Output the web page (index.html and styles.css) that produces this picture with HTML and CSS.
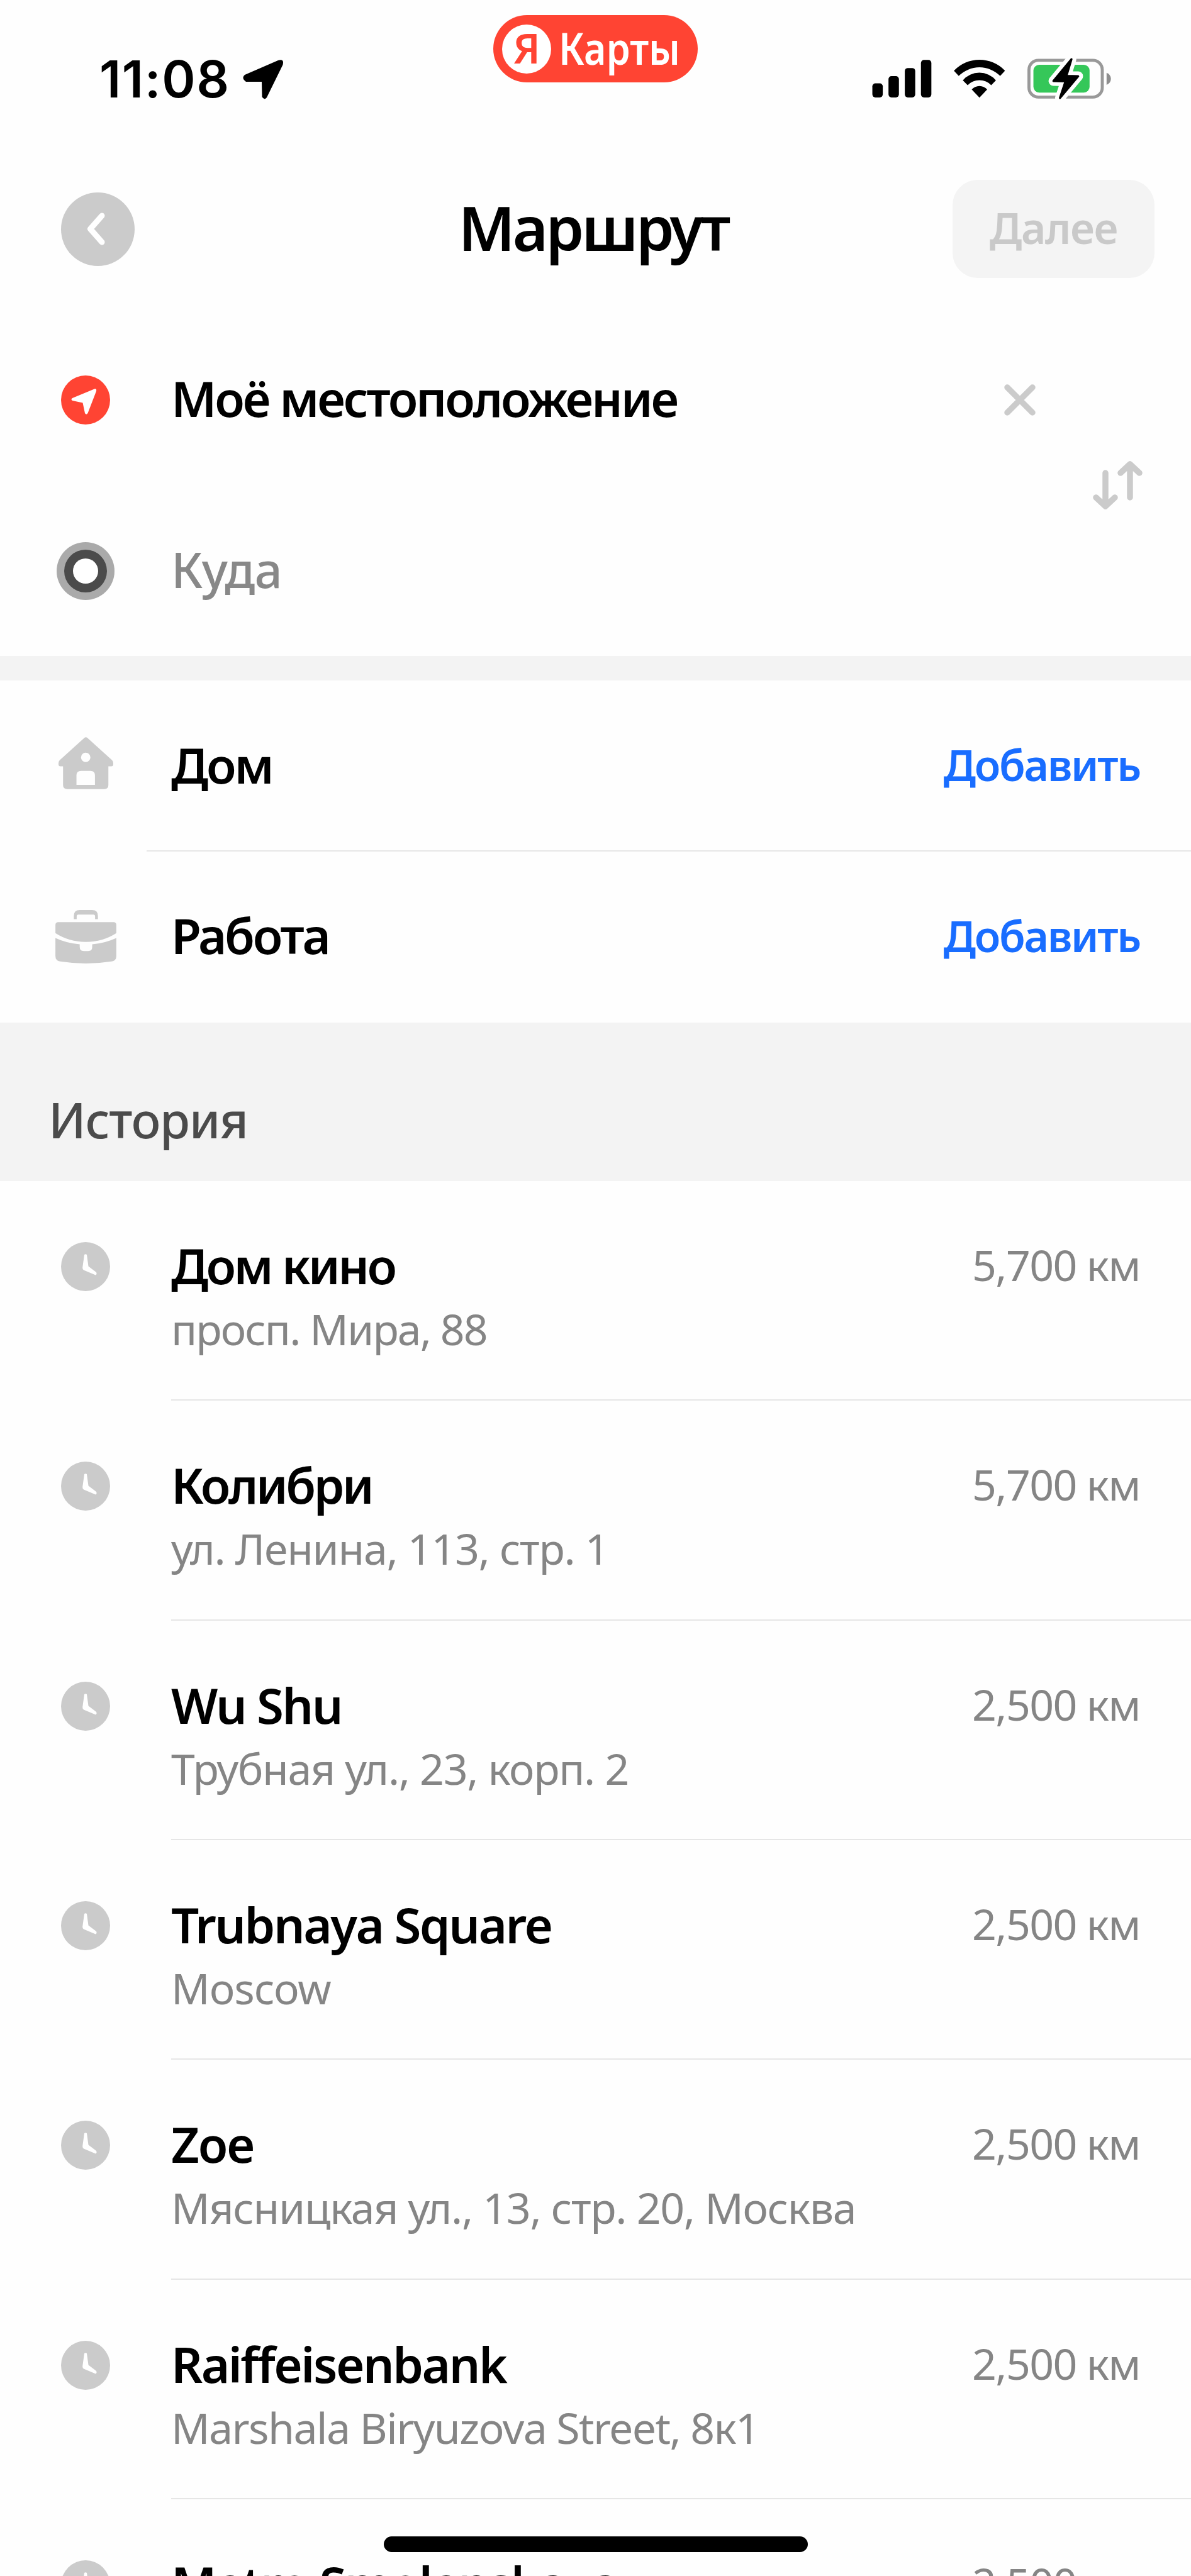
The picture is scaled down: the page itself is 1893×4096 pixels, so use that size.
FILE: index.html
```html
<!DOCTYPE html>
<html lang="ru">
<head>
    <meta charset="UTF-8">
    <meta name="viewport" content="width=device-width, initial-scale=1.0">
    <title>Маршрут</title>
    <link rel="stylesheet" href="styles.css">
</head>
<body>
    <svg class="sprite" width="0" height="0">
        <symbol id="clock" viewBox="0 0 78 78">
            <circle cx="39" cy="39" r="39" fill="#cbcbcb"/>
            <path d="M37 20 Q39 18.500 41 20 L43.500 38.500 L56 48 Q57.500 51 55 52.500 L36 44.500 Q34 43 34.200 40.500 Z" fill="#fff"/>
        </symbol>
    </svg>

    <div class="screen">
        <header class="status-bar">
            <div class="status-left">
                <span class="time">11:08</span>
                <svg class="location" viewBox="0 0 64 63">
                    <path d="M5 35 Q-3 29 3 24 L56 1 Q66 -2 63.500 8 L38 60 Q34 65 30.500 59 L30 35 Z" fill="#000"/>
                </svg>
            </div>
            <svg class="status-icons" viewBox="60 74 1422 246">
                <rect x="62" y="225" width="62" height="84" rx="18"/>
                <rect x="158" y="182" width="62" height="127" rx="18"/>
                <rect x="255" y="134" width="62" height="175" rx="18"/>
                <rect x="351" y="86" width="62" height="223" rx="18"/>
                <path d="M547 150 A210 210 0 0 1 851 150 L822 181 A174 174 0 0 0 576 181 Z"/>
                <path d="M600 207 A130 130 0 0 1 797 207 L769 236 A97 97 0 0 0 629 236 Z"/>
                <path d="M653 262 A60 60 0 0 1 745 262 L699 310 Z"/>
                <rect x="993.500" y="88" width="436" height="219" rx="56" fill="none" stroke="#999" stroke-width="18"/>
                <path d="M1455 162 Q1481 172 1481 198 Q1481 224 1455 234 Z" fill="#8e8e8e"/>
                <rect x="1020" y="115" width="334" height="165" rx="34" fill="#35c759"/>
                <path class="bolt-outline" d="M1246 82 L1139 211 L1211 213 L1178 312 L1286 183 L1216 181 Z"/>
                <path class="bolt" d="M1246 82 L1139 211 L1211 213 L1178 312 L1286 183 L1216 181 Z"/>
            </svg>
            <div class="app-badge">
                <span class="app-logo">Я</span>
                <span class="app-name">Карты</span>
            </div>
        </header>

        <nav class="nav-bar">
            <button class="back" type="button" aria-label="Назад">
                <svg viewBox="0 0 30 52">
                    <path d="M25 5 L6.500 26 L25 47" fill="none" stroke="#fff" stroke-width="9" stroke-linecap="round" stroke-linejoin="round"/>
                </svg>
            </button>
            <h1 class="title">Маршрут</h1>
            <button class="next" type="button" disabled>Далее</button>
        </nav>

        <section class="route">
            <div class="fields">
                <div class="row">
                    <div class="icon">
                        <svg class="from-icon" viewBox="0 0 78 78">
                            <circle cx="39" cy="39" r="39" fill="#ff4433"/>
                            <path d="M18 40 Q15 38 18 36 L53 21.500 Q57 20.500 56 25 L42.500 60 Q40 63.500 38 60 L34.500 43.500 Z" fill="#fff"/>
                        </svg>
                    </div>
                    <span class="name">Моё местоположение</span>
                    <svg class="clear" viewBox="0 0 50 50">
                        <path d="M5 5 L45 45 M45 5 L5 45" stroke="#cbcbcb" stroke-width="9.500" stroke-linecap="round"/>
                    </svg>
                </div>
                <div class="row">
                    <div class="icon">
                        <svg class="to-icon" viewBox="0 0 92 92">
                            <circle cx="46" cy="46" r="46" fill="#aaa"/>
                            <circle cx="46" cy="46" r="34" fill="#4b4b4b"/>
                            <circle cx="46" cy="46" r="20" fill="#fff"/>
                        </svg>
                    </div>
                    <span class="placeholder">Куда</span>
                </div>
            </div>
            <svg class="swap" viewBox="0 0 79 79">
                <g fill="none" stroke="#cbcbcb" stroke-width="9.500" stroke-linecap="round" stroke-linejoin="round">
                    <path d="M20 20 V70 M5 59 L20 73 L35 59"/>
                    <path d="M59 59 V9 M44 20 L59 6 L74 20"/>
                </g>
            </svg>
        </section>

        <section class="places">
            <div class="row">
                <div class="icon">
                    <svg class="home-icon" viewBox="75 77 326 309">
                        <path fill-rule="evenodd" fill="#cbcbcb" d="M230 80 Q238 74 246 80 L394 214 Q401 221 401 232 V238 Q401 250 389 250 H372 V362 Q372 386 348 386 H127 Q102 386 102 362 V250 H87 Q75 250 75 238 V232 Q75 221 82 214 Z M237 169 A28 28 0 1 0 237 225 A28 28 0 1 0 237 169 Z M182 361 H292 V304 Q292 277 265 277 H209 Q182 277 182 304 Z"/>
                    </svg>
                </div>
                <span class="name">Дом</span>
                <a class="add">Добавить</a>
            </div>
            <div class="row">
                <div class="icon">
                    <svg class="work-icon" viewBox="56 1101 361 317">
                        <g fill="#cbcbcb">
                            <path d="M165 1155 V1136 Q165 1101 200 1101 H273 Q308 1101 308 1136 V1155 H291 V1138 Q291 1128 281 1128 H192 Q182 1128 182 1138 V1155 Z"/>
                            <path d="M56 1190 Q56 1173 73 1173 H400 Q417 1173 417 1190 V1238 Q336 1290 237 1290 Q137 1290 56 1238 Z"/>
                            <path d="M56 1267 Q125 1299 200 1304 V1320 Q200 1344 224 1344 H250 Q274 1344 274 1320 V1304 Q348 1299 417 1267 V1374 Q417 1402 388 1406 Q237 1430 85 1406 Q56 1402 56 1374 Z"/>
                        </g>
                    </svg>
                </div>
                <span class="name">Работа</span>
                <a class="add">Добавить</a>
            </div>
        </section>

        <h2 class="history-title">История</h2>

        <section class="history">
            <div class="item">
                <svg class="clock"><use href="#clock"/></svg>
                <div class="info">
                    <div class="name">Дом кино</div>
                    <div class="address short">просп. Мира, 88</div>
                </div>
                <span class="distance">5,700 км</span>
            </div>
            <div class="item">
                <svg class="clock"><use href="#clock"/></svg>
                <div class="info">
                    <div class="name">Колибри</div>
                    <div class="address">ул. Ленина, 113, стр. 1</div>
                </div>
                <span class="distance">5,700 км</span>
            </div>
            <div class="item">
                <svg class="clock"><use href="#clock"/></svg>
                <div class="info">
                    <div class="name latin">Wu Shu</div>
                    <div class="address">Трубная ул., 23, корп. 2</div>
                </div>
                <span class="distance">2,500 км</span>
            </div>
            <div class="item">
                <svg class="clock"><use href="#clock"/></svg>
                <div class="info">
                    <div class="name latin">Trubnaya Square</div>
                    <div class="address">Moscow</div>
                </div>
                <span class="distance">2,500 км</span>
            </div>
            <div class="item">
                <svg class="clock"><use href="#clock"/></svg>
                <div class="info">
                    <div class="name latin">Zoe</div>
                    <div class="address">Мясницкая ул., 13, стр. 20, Москва</div>
                </div>
                <span class="distance">2,500 км</span>
            </div>
            <div class="item">
                <svg class="clock"><use href="#clock"/></svg>
                <div class="info">
                    <div class="name latin">Raiffeisenbank</div>
                    <div class="address street">Marshala Biryuzova Street, 8к1</div>
                </div>
                <span class="distance">2,500 км</span>
            </div>
            <div class="item">
                <svg class="clock"><use href="#clock"/></svg>
                <div class="info">
                    <div class="name latin">Metro Smolenskaya</div>
                </div>
                <span class="distance">2,500 км</span>
            </div>
        </section>

        <div class="home-indicator"></div>
    </div>
</body>
</html>
```

FILE: styles.css
```css
* {
    box-sizing: border-box;
}
body {
    margin: 0;
    background-color: #fff;
    font-family: 'Noto Sans', 'Open Sans', sans-serif;
    color: #000;
}
.screen {
    position: relative;
    width: 1893px;
    height: 4096px;
    overflow: hidden;
    background-color: #fefefe;
}
.sprite {
    display: none;
}
svg {
    display: block;
    flex-shrink: 0;
}
button {
    border: none;
    padding: 0;
    font-family: inherit;
}

/* status bar */
.status-bar {
    display: flex;
    justify-content: space-between;
    align-items: center;
    height: 228px;
    padding: 0 127px 0 158px;
}
.status-left {
    display: flex;
    align-items: center;
    gap: 24px;
    height: 100px;
    margin-top: 24px;
}
.time {
    width: 204px;
    font-family: Inter, sans-serif;
    font-size: 81px;
    font-weight: 600;
    line-height: 100px;
    letter-spacing: 1.6px;
    white-space: nowrap;
}
.location {
    width: 64px;
    height: 63px;
}
.status-icons {
    width: 380px;
    height: 66px;
    margin-top: 22px;
}
.bolt {
    fill: #000;
    stroke: #000;
    stroke-width: 13;
    stroke-linejoin: round;
}
.bolt-outline {
    fill: #fff;
    stroke: #fff;
    stroke-width: 58;
    stroke-linejoin: round;
}
.app-badge {
    position: absolute;
    top: 24px;
    left: 784px;
    display: flex;
    align-items: center;
    width: 325px;
    height: 107px;
    padding-left: 14px;
    border-radius: 54px;
    background-color: #ff4433;
    color: #fff;
}
.app-logo {
    flex-shrink: 0;
    width: 78px;
    height: 78px;
    border-radius: 50%;
    background-color: #fff;
    color: #ff4433;
    font-size: 65px;
    font-weight: 600;
    line-height: 74px;
    text-align: center;
}
.app-name {
    margin: 0 0 4px 12px;
    font-size: 71px;
    font-weight: 600;
    line-height: 100px;
    transform: scaleX(0.86);
    transform-origin: left;
}

/* title bar */
.nav-bar {
    display: flex;
    justify-content: space-between;
    align-items: center;
    height: 272px;
    padding: 0 58px 0 97px;
}
.back {
    display: flex;
    justify-content: center;
    align-items: center;
    width: 117px;
    height: 117px;
    margin-right: 158px;
    border-radius: 50%;
    background-color: #cbcbcb;
}
.back svg {
    width: 30px;
    height: 52px;
    margin-right: 8px;
}
.title {
    margin: 0 0 6px;
    font-size: 97px;
    font-weight: 600;
    line-height: 120px;
    letter-spacing: -3.8px;
}
.next {
    width: 321px;
    height: 156px;
    padding-bottom: 5px;
    border-radius: 40px;
    background-color: #f4f4f4;
    color: #c9c9c9;
    font-size: 68px;
    font-weight: 560;
    letter-spacing: -1.4px;
}

/* route fields */
.route {
    display: flex;
    align-items: center;
    height: 543.4px;
}
.fields {
    flex: 1;
}
.row {
    display: flex;
    align-items: center;
    height: 271.7px;
}
.icon {
    display: flex;
    justify-content: center;
    flex-shrink: 0;
    width: 272px;
}
.from-icon {
    width: 78px;
    height: 78px;
}
.to-icon {
    width: 92px;
    height: 92px;
}
.name {
    flex: 1;
    font-size: 78px;
    font-weight: 600;
    line-height: 100px;
    letter-spacing: -3.6px;
    white-space: nowrap;
}
.name.latin {
    letter-spacing: -2.5px;
}
.row .name,
.placeholder,
.add {
    margin-bottom: 5px;
}
.row .name {
    letter-spacing: -3.2px;
}
.placeholder {
    color: #888;
    font-size: 78px;
    font-weight: 500;
    letter-spacing: -0.8px;
}
.clear {
    width: 50px;
    height: 50px;
    margin-right: 91px;
}
.swap {
    width: 79px;
    height: 79px;
    margin-right: 77px;
}

/* home and work */
.places {
    border-top: 39px solid #f3f3f3;
}
.places .row:first-child {
    background: linear-gradient(#e6e6e6, #e6e6e6) no-repeat 233px 100% / 100% 2px;
}
.home-icon {
    width: 87px;
    height: 83px;
    margin-bottom: 10px;
}
.work-icon {
    width: 97px;
    height: 85px;
}
.add {
    margin-right: 81px;
    color: #196dff;
    font-size: 68px;
    font-weight: 560;
    letter-spacing: -2.3px;
}

/* history */
.history-title {
    height: 252px;
    margin: 0;
    padding: 104px 0 0 77px;
    background-color: #f3f3f3;
    color: #4b4b4b;
    font-size: 78px;
    font-weight: 540;
    letter-spacing: -1.3px;
    line-height: 100px;
}
.item {
    display: flex;
    align-items: flex-start;
    height: 349.4px;
    background: linear-gradient(#e6e6e6, #e6e6e6) no-repeat 272px 100% / 100% 2px;
}
.clock {
    width: 78px;
    height: 78px;
    margin: 97px 97px 0;
}
.info {
    flex: 1;
    padding-top: 84px;
}
.address {
    padding-top: 1px;
    color: #858585;
    font-size: 68px;
    line-height: 100px;
    letter-spacing: -1.3px;
    white-space: nowrap;
}
.address.short {
    letter-spacing: -1.9px;
}
.address.street {
    letter-spacing: -1.6px;
}
.distance {
    margin: 83px 81px 0 0;
    color: #858585;
    font-size: 68px;
    line-height: 100px;
    letter-spacing: -1.6px;
}
.home-indicator {
    position: absolute;
    bottom: 38px;
    left: 610px;
    width: 674px;
    height: 25px;
    border-radius: 13px;
    background-color: #000;
}
```
